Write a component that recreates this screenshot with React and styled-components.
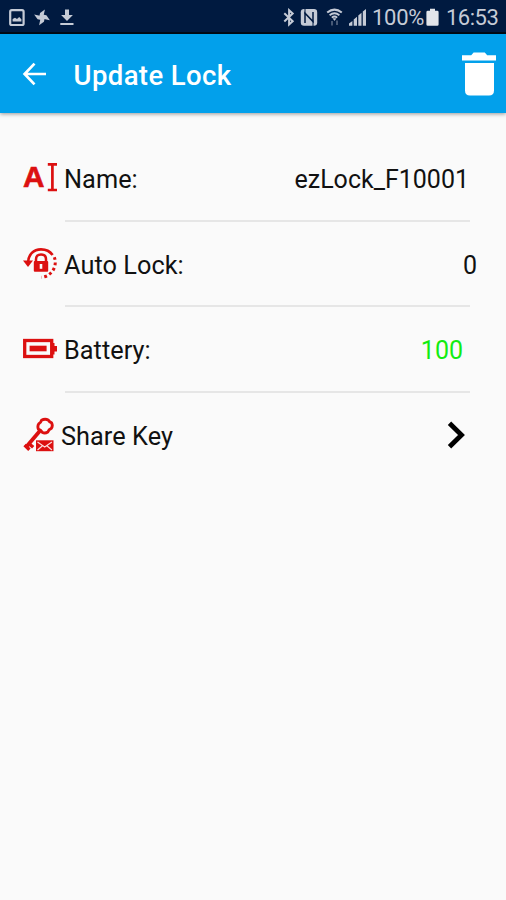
import React from 'react';
import styled, { createGlobalStyle } from 'styled-components';

const GlobalStyle = createGlobalStyle`
  * {
    box-sizing: border-box;
  }

  body {
    margin: 0;
    background-color: #fafafa;
    font-family: Roboto, 'Liberation Sans', sans-serif;
  }

  svg {
    display: block;
    flex-shrink: 0;
  }
`;

const Screen = styled.div`
  display: flex;
  flex-direction: column;
  min-height: 100vh;
  background-color: #fafafa;
`;

const StatusBar = styled.div`
  display: flex;
  justify-content: space-between;
  height: 34px;
  padding: 8px 8px 0;
  background-color: #001a40;
  border-bottom: 2px solid #000a16;
  color: #c5cbd6;
`;

const StatusGroup = styled.div`
  display: flex;
  align-items: flex-start;
  gap: ${({ $gap }) => $gap || 0}px;
`;

const Signals = styled.div`
  display: flex;
  gap: 5px;
`;

const StatusText = styled.span`
  width: ${({ $width }) => $width}px;
  margin-left: ${({ $left }) => $left}px;
  font-size: 22px;
  line-height: 20px;
  letter-spacing: ${({ $spacing }) => $spacing || 0}px;
  white-space: nowrap;
`;

const AppBar = styled.header`
  display: flex;
  align-items: center;
  height: 78.5px;
  padding: 1px 9px 0 22px;
  background-color: #02a0eb;
  box-shadow: 0 1px 4px rgba(0, 0, 0, 0.4);
  color: #fff;
`;

const IconButton = styled.button`
  padding: 0;
  border: none;
  background: none;
  color: inherit;
  cursor: pointer;
`;

const Title = styled.h1`
  flex: 1;
  margin: 4px 0 0 26.5px;
  font-size: 27.5px;
  font-weight: 500;
  line-height: 32px;
  letter-spacing: 0.4px;
`;

const List = styled.main`
  display: flex;
  flex-direction: column;
  padding: 22.5px 0 0 23px;
`;

const Row = styled.div`
  display: flex;
  align-items: center;
  height: 85.7px;
  padding-right: ${({ $right }) => $right}px;
  color: #111;
`;

const IconCell = styled.div`
  width: ${({ $width }) => $width || 41}px;
  flex-shrink: 0;
`;

const Label = styled.span`
  flex: 1;
  padding-top: 4.5px;
  font-size: 25.3px;
  line-height: 30px;
  letter-spacing: 0.05px;
`;

const Value = styled.span`
  padding-top: 4.5px;
  font-size: 25px;
  line-height: 30px;
  color: ${({ $color }) => $color || '#111'};
`;

const Divider = styled.hr`
  width: 405px;
  height: 2px;
  margin: -1px 0 -1px 42px;
  border: none;
  background-color: #e6e6e6;
`;

const RED = '#dc1010';

const PictureIcon = () => (
  <svg width="17" height="19" viewBox="0 0 17 19" fill="none">
    <rect x="2.2" y="2.2" width="13.4" height="14.8" rx="1.6" stroke="currentColor" strokeWidth="2.2" />
    <path d="M4.6 13.4V11l2.4-1.2 2 1.2 2.2-2 2.2 2.2v2.2z" fill="currentColor" />
  </svg>
);

// one blade, turned four times around the centre
const PinwheelIcon = () => (
  <svg width="18" height="19" viewBox="0 0 18 19" fill="currentColor">
    {[0, 90, 180, 270].map((angle) => (
      <path key={angle} d="M9 9.3H6.2V5.4L10.200 1v8.300z" transform={`rotate(${angle + 12} 9 9.300)`} />
    ))}
  </svg>
);

const DownloadIcon = () => (
  <svg width="15" height="19" viewBox="0 0 15 19" fill="currentColor">
    <path d="M6 1.5h4v5.4h3.9L8 12.900l-5.900-6H6zM1.300 15h13.200v2H1.300z" />
  </svg>
);

const BluetoothIcon = () => (
  <svg width="13" height="19" viewBox="0 0 13 19" fill="none" stroke="currentColor" strokeWidth="2">
    <path d="M2.300 5.300l8.400 7.900-3.600 3.300V2.200l3.600 3.300-8.400 8" />
  </svg>
);

const NfcIcon = () => (
  <svg width="18" height="19" viewBox="0 0 18 19">
    <rect x=".8" y="1" width="16.400" height="16.800" rx="3.200" fill="currentColor" />
    <path d="M5 15V5.200l8 8.400V4" fill="none" stroke="#001a40" strokeWidth="1.500" />
    <path d="M5 1v5M13 12.500V18" fill="none" stroke="#001a40" strokeWidth="1" />
  </svg>
);

const WifiIcon = () => (
  <svg width="20" height="19" viewBox="-3 0 20 19" fill="none" stroke="currentColor">
    <path d="M1.200 4.600Q8.500-1.400 15.800 4.600" strokeWidth="2" />
    <path d="M3.600 7.200q4.900-4 9.800 0M5.800 9.600q2.700-2.200 5.400 0" strokeWidth="1.800" />
    <path d="M7 10.600h3l-1.500 2z" fill="currentColor" strokeWidth=".5" />
    <path d="M6 13v4.400M11 12.600V17" strokeWidth="1.800" opacity=".4" />
  </svg>
);

const SignalIcon = () => (
  <svg width="19" height="19" viewBox="0 0 19 19" fill="currentColor">
    <path d="M1 17.800v-2.200l3.400-2.600v4.800zM5.700 17.800v-6.200L9 8.800v9zM10.300 17.800V7.600l3.200-2.800v13zM14.800 17.800V3.600L18 1v16.800z" />
  </svg>
);

const PhoneBatteryIcon = () => (
  <svg width="13" height="19" viewBox="0 0 13 19" fill="#e2e5ea">
    <path d="M4 .8h5v2h2.200q1.400 0 1.400 1.400v12.200q0 1.400-1.400 1.400H1.800Q.4 17.800.4 16.400V4.200q0-1.400 1.400-1.400H4z" />
  </svg>
);

const BackIcon = () => (
  <svg width="25" height="24" viewBox="0 0 25 24" fill="none" stroke="currentColor" strokeWidth="2.700">
    <path d="M24 12H3M12.500 1.600 2.600 12l9.900 10.400" />
  </svg>
);

const TrashIcon = () => (
  <svg width="36" height="44" viewBox="0 0 36 44" fill="currentColor">
    <path d="M1 3.200h9.200L12.600.5h11.200l2.400 2.700H35v5.300H1zM4 11h29v27.500q0 5-5 5H9q-5 0-5-5z" />
  </svg>
);

const NameIcon = () => (
  <svg width="36" height="34" viewBox="0 0 36 34">
    <text
      x="0"
      y="25.500"
      fill={RED}
      stroke={RED}
      strokeWidth=".6"
      fontFamily="'Liberation Sans', sans-serif"
      fontWeight="700"
      fontSize="30"
      textLength="21.500"
      lengthAdjust="spacingAndGlyphs"
    >
      A
    </text>
    <path d="M24.800 3.300h9.200M24.800 29h9.200M29.400 3v26" fill="none" stroke={RED} strokeWidth="2.700" />
  </svg>
);

const AutoLockIcon = () => (
  <svg width="36" height="34" viewBox="0 0 36 34" fill="none" stroke={RED}>
    <path d="M5 16.500C5 7 11 2.300 18 2.300c5 0 9 1.900 11.600 5.700" strokeWidth="2.700" />
    <path d="M0 13.500h10L5 20z" fill={RED} stroke="none" />
    <path d="M31 9.300A15 15 0 0 1 18.500 30.300" strokeWidth="3" strokeDasharray="2.800 2.600" strokeDashoffset="-1" />
    <path d="M13 16v-3.800q0-4.700 5-4.700t5 4.700V16" strokeWidth="2.500" />
    <rect x="10.800" y="14" width="14.400" height="10.800" rx="1" fill={RED} stroke="none" />
    <path d="M18 17v4.800" stroke="#fafafa" strokeWidth="2.600" />
  </svg>
);

const BatteryIcon = () => (
  <svg width="36" height="34" viewBox="0 0 36 34" fill="none" stroke={RED}>
    <rect x="1.700" y="8.500" width="27" height="16" strokeWidth="3.300" />
    <rect x="6.600" y="13.700" width="17" height="5.600" fill={RED} stroke="none" />
    <path d="M29 11h2.500v3H34v5.500h-2.500v3H29z" fill={RED} stroke="none" />
  </svg>
);

const ShareKeyIcon = () => (
  <svg width="34" height="36" viewBox="0 0 34 36" fill="none" stroke={RED}>
    <path
      d="M18.500 3.300Q22 1.200 25.200 3q1 1.800 3.400 2.800 1.500 3-.3 5.600-2.500 1-3.500 3.600-3 1.800-5.600.2-1.200-2-3.800-3-1.200-3 .4-5.500Q18 5.500 18.500 3.300z"
      strokeWidth="2.900"
      strokeLinejoin="round"
    />
    <path d="M17 13.800 3.200 30" strokeWidth="3.800" />
    <path d="m1.600 28 4.800 4.800M6 26.700l4.200 3.600" strokeWidth="3.400" />
    <rect x="13" y="23.300" width="17.500" height="10.900" fill={RED} stroke="none" />
    <path d="m14.500 25 7.200 5 7.200-5M14.500 33l5-4.300M28.900 33l-5-4.300" stroke="#fbdede" strokeWidth="1.200" />
  </svg>
);

const ChevronIcon = () => (
  <svg width="20" height="28" viewBox="0 0 20 28" fill="none" stroke="#000" strokeWidth="4.800">
    <path d="m2.500 2.300 12 11.700-12 11.700" />
  </svg>
);

const App = () => {
  return (
    <Screen>
      <GlobalStyle />

      <StatusBar>
        <StatusGroup $gap={8}>
          <PictureIcon />
          <PinwheelIcon />
          <DownloadIcon />
        </StatusGroup>
        <StatusGroup>
          <Signals>
            <BluetoothIcon />
            <NfcIcon />
            <WifiIcon />
            <SignalIcon />
          </Signals>
          <StatusText $left={5} $width={54} $spacing={-0.3}>100%</StatusText>
          <PhoneBatteryIcon />
          <StatusText $left={7} $width={52} $spacing={-0.5}>16:53</StatusText>
        </StatusGroup>
      </StatusBar>

      <AppBar>
        <IconButton aria-label="Back">
          <BackIcon />
        </IconButton>
        <Title>Update Lock</Title>
        <IconButton aria-label="Delete">
          <TrashIcon />
        </IconButton>
      </AppBar>

      <List>
        <Row $right={37}>
          <IconCell><NameIcon /></IconCell>
          <Label>Name:</Label>
          <Value>ezLock_F10001</Value>
        </Row>
        <Divider />

        <Row $right={29}>
          <IconCell><AutoLockIcon /></IconCell>
          <Label>Auto Lock:</Label>
          <Value>0</Value>
        </Row>
        <Divider />

        <Row $right={43}>
          <IconCell><BatteryIcon /></IconCell>
          <Label>Battery:</Label>
          <Value $color="#12ec12">100</Value>
        </Row>
        <Divider />

        <Row $right={39}>
          <IconCell $width={38}><ShareKeyIcon /></IconCell>
          <Label>Share Key</Label>
          <ChevronIcon />
        </Row>
      </List>
    </Screen>
  );
};

export default App;
